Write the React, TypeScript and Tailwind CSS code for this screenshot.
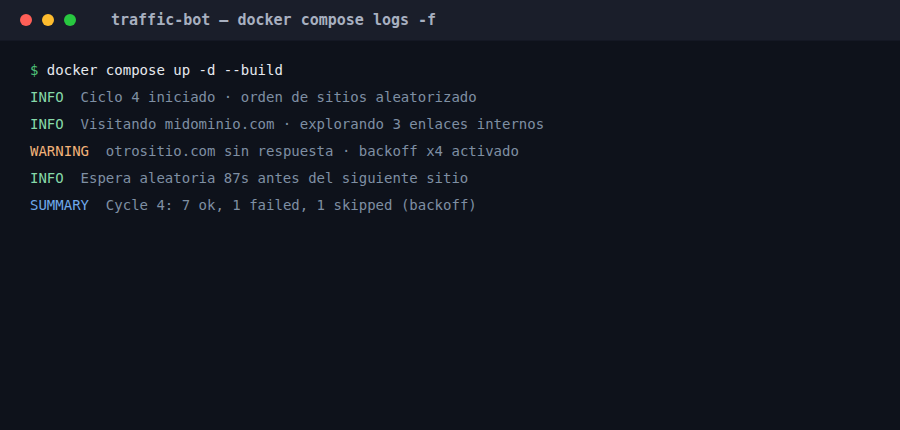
const mono = "font-['DejaVu_Sans_Mono','Liberation_Mono',monospace]";

const logs = [
  { level: "INFO", color: "text-[#86d9a8]", text: "Ciclo 4 iniciado · orden de sitios aleatorizado" },
  { level: "INFO", color: "text-[#86d9a8]", text: "Visitando midominio.com · explorando 3 enlaces internos" },
  { level: "WARNING", color: "text-[#f2b27a]", text: "otrositio.com sin respuesta · backoff x4 activado" },
  { level: "INFO", color: "text-[#86d9a8]", text: "Espera aleatoria 87s antes del siguiente sitio" },
  { level: "SUMMARY", color: "text-[#6fa8ea]", text: "Cycle 4: 7 ok, 1 failed, 1 skipped (backoff)" },
];

export default function App() {
  return (
    <div className={`w-[900px] h-[430px] bg-[#0e121b] flex flex-col ${mono}`}>
      <div className="h-[41px] bg-[#1a1e2a] flex items-center pl-5 border-b border-[#141824]">
        <div className="flex gap-[10px]">
          <span className="w-3 h-3 rounded-full bg-[#ff5f57]" />
          <span className="w-3 h-3 rounded-full bg-[#febc2e]" />
          <span className="w-3 h-3 rounded-full bg-[#28c840]" />
        </div>
        <div className="ml-[35px] text-[15px] font-bold text-[#a8b0c0]">
          traffic-bot — docker compose logs -f
        </div>
      </div>
      <div className="px-[30px] pt-[16px] text-[14px] leading-[27px] whitespace-pre">
        <div className="text-[#e6e9ef]">
          <span className="text-[#4ec27a]">$</span> docker compose up -d --build
        </div>
        {logs.map((l, i) => (
          <div key={i}>
            <span className={l.color}>{l.level}</span>
            <span className="text-[#7f8fa3]">{"  " + l.text}</span>
          </div>
        ))}
      </div>
    </div>
  );
}
